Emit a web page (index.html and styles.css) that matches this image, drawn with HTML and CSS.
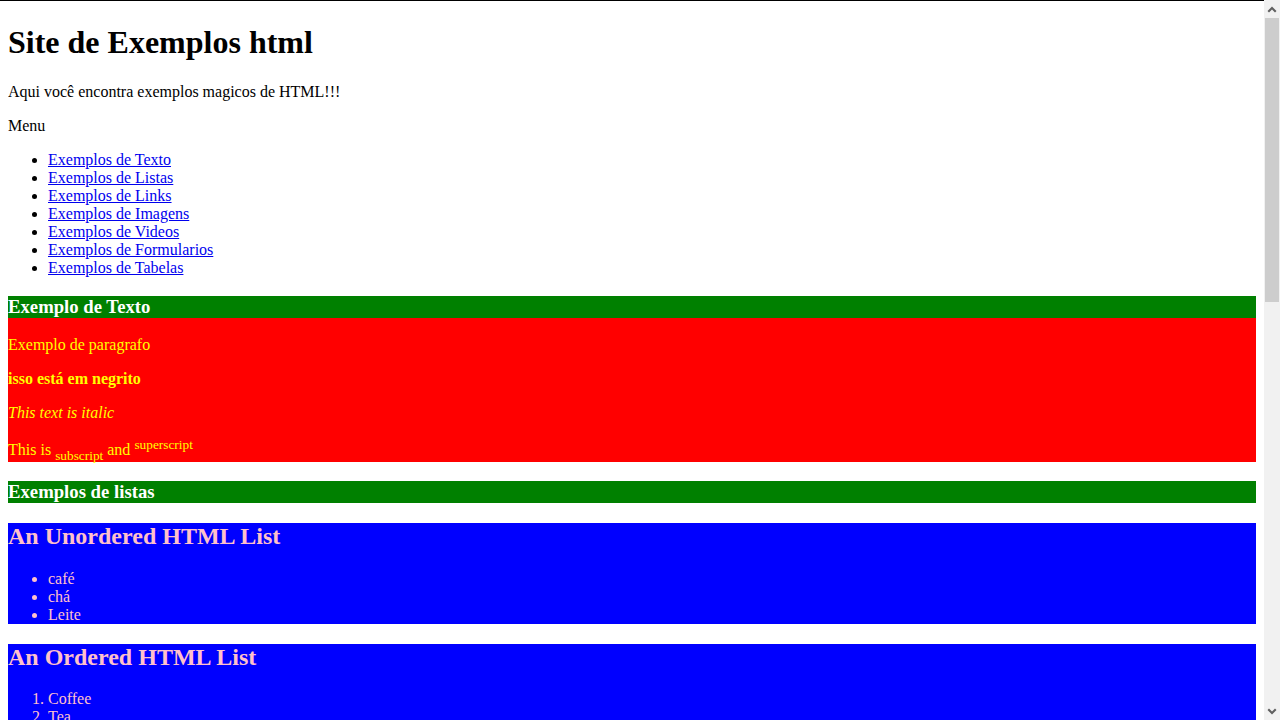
FILE: index.html
```html
<!DOCTYPE html>
<html lang="pt-BR">
<head>
<meta charset="utf-8">
<title>Site de Exemplos html</title>
<link rel="stylesheet" href="styles.css">
</head>
<body>
<header>
  <h1>Site de Exemplos html</h1>
  <p>Aqui você encontra exemplos magicos de HTML!!!</p>
</header>
<nav>
  <p>Menu</p>
  <ul>
    <li><a href="#texto">Exemplos de Texto</a></li>
    <li><a href="#listas">Exemplos de Listas</a></li>
    <li><a href="#links">Exemplos de Links</a></li>
    <li><a href="#imagens">Exemplos de Imagens</a></li>
    <li><a href="#videos">Exemplos de Videos</a></li>
    <li><a href="#formularios">Exemplos de Formularios</a></li>
    <li><a href="#tabelas">Exemplos de Tabelas</a></li>
  </ul>
</nav>
<section id="texto" class="texto">
  <h3 class="titulo">Exemplo de Texto</h3>
  <p>Exemplo de paragrafo</p>
  <p><b>isso está em negrito</b></p>
  <p><i>This text is italic</i></p>
  <p>This is <sub>subscript</sub> and <sup>superscript</sup></p>
</section>
<section id="listas">
  <h3 class="titulo">Exemplos de listas</h3>
  <div class="lista">
    <h2>An Unordered HTML List</h2>
    <ul>
      <li>café</li>
      <li>chá</li>
      <li>Leite</li>
    </ul>
  </div>
  <div class="lista">
    <h2>An Ordered HTML List</h2>
    <ol>
      <li>Coffee</li>
      <li>Tea</li>
      <li>Milk</li>
    </ol>
  </div>
</section>
<section id="links">
  <h3 class="titulo">Exemplos de Links</h3>
  <p><a href="#">Visite nossa página de HTML</a></p>
  <p><a href="#">Voltar ao topo</a></p>
</section>
<section id="imagens">
  <h3 class="titulo">Exemplos de Imagens</h3>
  <div class="imagem"></div>
</section>
<section id="videos">
  <h3 class="titulo">Exemplos de Videos</h3>
  <div class="video"></div>
</section>
<section id="formularios">
  <h3 class="titulo">Exemplos de Formularios</h3>
  <form>
    <label>Nome:</label><br>
    <input type="text"><br>
    <label>Sobrenome:</label><br>
    <input type="text"><br><br>
    <input type="submit" value="Enviar">
  </form>
</section>
<section id="tabelas">
  <h3 class="titulo">Exemplos de Tabelas</h3>
  <table>
    <tr><th>Nome</th><th>Sobrenome</th><th>Idade</th></tr>
    <tr><td>Jill</td><td>Smith</td><td>50</td></tr>
    <tr><td>Eve</td><td>Jackson</td><td>94</td></tr>
  </table>
</section>
<div class="scrollbar" aria-hidden="true">
  <div class="sb-btn">
    <svg width="16" height="17" viewBox="0 0 16 17"><polygon points="3.5,11 8,6.5 12.5,11 11,12.5 8,9.5 5,12.5" fill="#606060"/></svg>
  </div>
  <div class="sb-track"><div class="sb-thumb"></div></div>
  <div class="sb-btn">
    <svg width="16" height="17" viewBox="0 0 16 17"><polygon points="3.5,7 8,11.5 12.5,7 11,5.5 8,8.5 5,5.5" fill="#606060"/></svg>
  </div>
</div>
</body>
</html>
```
FILE: styles.css
```css
html {
  border-top: 1px solid #000;
  margin-right: 16px;
  background: #fff;
}
body {
  margin: 8px;
  font-family: "Liberation Serif", "Times New Roman", serif;
  font-size: 16px;
  color: #000;
}
h1 {
  margin-top: 15.4px;
}
a {
  color: #0000ee;
}
sub,
sup {
  line-height: 1;
}
.titulo {
  background: green;
  color: #fff;
}
.texto {
  background: red;
  color: yellow;
}
.lista {
  background: blue;
  color: pink;
}
.imagem {
  width: 300px;
  height: 200px;
}
.video {
  width: 320px;
  height: 240px;
}
.scrollbar {
  position: fixed;
  top: 0;
  right: 0;
  width: 16px;
  height: 100vh;
  background: #f1f1f1;
  display: flex;
  flex-direction: column;
}
.sb-btn {
  height: 17px;
  flex: none;
}
.sb-btn svg {
  display: block;
}
.sb-track {
  flex: 1;
  padding: 1px 1px 0;
}
.sb-thumb {
  height: 284px;
  background: #cdcdcd;
}
```
